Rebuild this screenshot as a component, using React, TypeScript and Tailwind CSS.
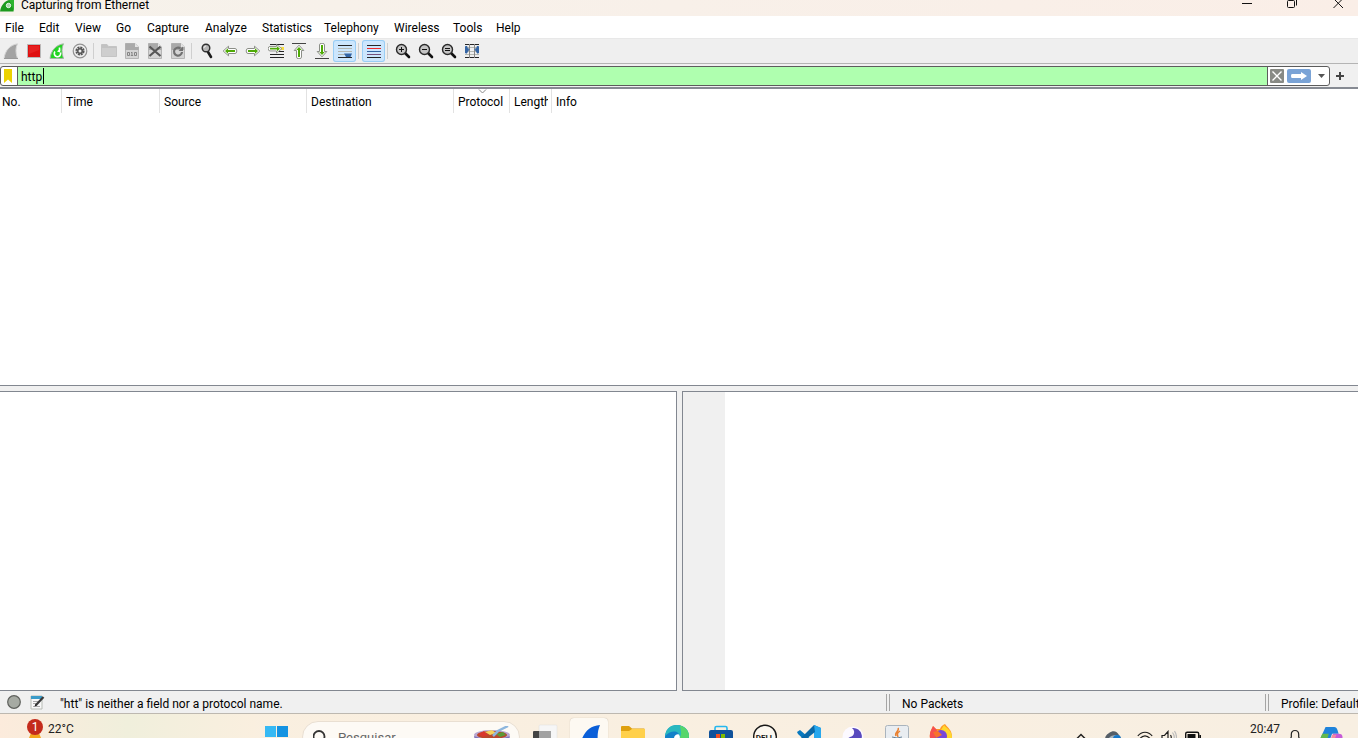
import React from 'react'

interface ToolItem {
  label: string
  icon: React.ReactNode
  active?: boolean
  disabled?: boolean
}

const menus = [
  { label: 'File', width: 'w-[34px]' },
  { label: 'Edit', width: 'w-9' },
  { label: 'View', width: 'w-[41px]' },
  { label: 'Go', width: 'w-[31px]' },
  { label: 'Capture', width: 'w-[58px]' },
  { label: 'Analyze', width: 'w-[57px]' },
  { label: 'Statistics', width: 'w-[62px]' },
  { label: 'Telephony', width: 'w-[70px]' },
  { label: 'Wireless', width: 'w-[59px]' },
  { label: 'Tools', width: 'w-[43px]' },
  { label: 'Help', width: 'w-10' }
]

const columns = [
  { label: 'No.', width: 'w-[62px]' },
  { label: 'Time', width: 'w-[98px]' },
  { label: 'Source', width: 'w-[147px]' },
  { label: 'Destination', width: 'w-[147px]' },
  { label: 'Protocol', width: 'w-14', sorted: true },
  { label: 'Length', width: 'w-[42px]' },
  { label: 'Info', width: '' }
]

function Icon({ children }: { children: React.ReactNode }) {
  return (
    <svg className="w-4 h-4 shrink-0" viewBox="0 0 16 16" fill="none" aria-hidden="true">
      {children}
    </svg>
  )
}

const arrowPath = 'M1.2 8 L6.5 3.2 V5.5 H13 Q14.8 5.5 14.8 8 Q14.8 10.5 13 10.5 H6.5 V12.8 Z'
const arrowCore = 'M3 8 L6 5.3 V7 H13 V9 H6 V10.7 Z'

function GreenArrow({ transform }: { transform?: string }) {
  return (
    <g transform={transform}>
      <path d={arrowPath} fill="#fff" stroke="#8b8e87" />
      <path d={arrowCore} fill="#4faa06" />
    </g>
  )
}

function Page({ children }: { children: React.ReactNode }) {
  return (
    <Icon>
      <path d="M1.5 .5H11L14.5 4V15.5H1.5Z" fill="#d4d4d4" stroke="#b5b5b5" />
      <path d="M1.5 .5H11V4H14.5V7H1.5Z" fill="#a9a9a9" />
      <path d="M11 .5V4H14.5Z" fill="#e4e4e4" />
      {children}
    </Icon>
  )
}

function Magnifier({ children }: { children?: React.ReactNode }) {
  return (
    <Icon>
      <path d="M10 10L14 14" stroke="#111" strokeWidth="2.6" strokeLinecap="round" />
      <circle cx="6.5" cy="6.5" r="5" fill="#c4c4c4" stroke="#2a2a2a" strokeWidth="1.4" />
      {children}
    </Icon>
  )
}

const toolGroups: ToolItem[][] = [
  [
    {
      label: 'Start capturing packets',
      disabled: true,
      icon: (
        <Icon>
          <path d="M1 15.5C2 8 6.5 2 14.5 .8C12.5 5 12.5 10 14.5 15.5Z" fill="#a3a3a3" stroke="#d6d6d6" />
          <path d="M1 15.5H15" stroke="#999" />
        </Icon>
      )
    },
    {
      label: 'Stop capturing packets',
      icon: (
        <Icon>
          <path d="M1.5 1.5H14.5V14.5H1.5Z" fill="#df1010" stroke="#b9b9b9" />
          <path d="M3 3H13V7L3 11Z" fill="#ef3030" opacity=".5" />
        </Icon>
      )
    },
    {
      label: 'Restart current capture',
      icon: (
        <Icon>
          <path d="M1 15.5C2 8 6.5 2 14.5 .8C12.5 5 12.5 10 14.5 15.5Z" fill="#22d422" stroke="#a5b5a5" />
          <path d="M10.5 4.5V8M6 8.5A3.2 3.2 0 1 0 11.5 9.5" stroke="#fff" strokeWidth="1.6" />
          <path d="M8 8.5L11.2 5.5V9.5Z" fill="#fff" />
        </Icon>
      )
    },
    {
      label: 'Capture options',
      icon: (
        <Icon>
          <circle cx="8" cy="8" r="6.8" fill="#eee" stroke="#929292" strokeWidth="1.2" />
          <circle cx="8" cy="8" r="3.6" stroke="#555" strokeWidth="2" strokeDasharray="2 .8" />
          <circle cx="8" cy="8" r="3" fill="#555" />
          <circle cx="8" cy="8" r="1.5" fill="#eee" />
        </Icon>
      )
    }
  ],
  [
    {
      label: 'Open',
      disabled: true,
      icon: (
        <Icon>
          <path d="M.5 1.5H6L7.5 3.5H15.5V13.5H.5Z" fill="#c2c2c2" stroke="#c4c4c4" />
          <path d="M1 5H15V13H1Z" fill="#cecece" />
        </Icon>
      )
    },
    {
      label: 'Save',
      disabled: true,
      icon: (
        <Page>
          <path
            d="M3.5 9.5H5.5V12.5H3.5ZM10.5 9.5H12.5V12.5H10.5ZM8 9V13M7 9.5H8M6.8 12.5H9.2"
            stroke="#858585"
          />
        </Page>
      )
    },
    {
      label: 'Close',
      icon: (
        <Page>
          <path d="M2.5 3.5L13.5 13M13.5 3.5L2.5 13" stroke="#565656" strokeWidth="2.2" />
        </Page>
      )
    },
    {
      label: 'Reload',
      icon: (
        <Page>
          <path d="M10.5 5.5A4 4 0 1 0 12 9" stroke="#707070" strokeWidth="2.2" />
          <path d="M8.5 8H13V3.5Z" fill="#707070" />
        </Page>
      )
    }
  ],
  [
    {
      label: 'Find a packet',
      icon: (
        <Icon>
          <path d="M9 9L12 14" stroke="#1b1b1b" strokeWidth="2.6" strokeLinecap="round" />
          <circle cx="7" cy="5" r="3.8" fill="#b5b5b5" stroke="#303030" strokeWidth="1.4" />
          <path d="M5 5A2 2 0 0 1 7 3" stroke="#eee" />
        </Icon>
      )
    },
    { label: 'Previous packet', icon: <Icon><GreenArrow /></Icon> },
    { label: 'Next packet', icon: <Icon><GreenArrow transform="rotate(180 8 8)" /></Icon> },
    {
      label: 'Go to packet',
      icon: (
        <Icon>
          <path d="M2 1.5H16M2 11.5H16M2 14.5H16" stroke="#252525" />
          <path d="M12 4H16V7H12Z" fill="#f6dd3e" />
          <path d="M11 8.5H16" stroke="#252525" />
          <GreenArrow transform="translate(15 -1.5) scale(-1 .9)" />
        </Icon>
      )
    },
    {
      label: 'First packet',
      icon: (
        <Icon>
          <path d="M1 .5H15" stroke="#444" />
          <GreenArrow transform="translate(0 1) rotate(90 8 8)" />
        </Icon>
      )
    },
    {
      label: 'Last packet',
      icon: (
        <Icon>
          <path d="M1 15.5H15" stroke="#444" />
          <GreenArrow transform="translate(0 -1) rotate(270 8 8)" />
        </Icon>
      )
    },
    {
      label: 'Auto scroll',
      active: true,
      icon: (
        <Icon>
          <path d="M1 2.5H15M1 14.5H15" stroke="#252525" />
          <path d="M1 5.5H15M1 8.5H15M1 11.5H8" stroke="#b3b6b0" />
          <path d="M7 10.5H15L13.5 14H9Z" fill="#3465a4" />
        </Icon>
      )
    }
  ],
  [
    {
      label: 'Colorize packets',
      active: true,
      icon: (
        <Icon>
          <path d="M1 2.5H15M1 14.5H15" stroke="#252525" />
          <path d="M1 5.5H15" stroke="#ef2929" />
          <path d="M1 8.5H15" stroke="#3465a4" />
          <path d="M1 11.5H15" stroke="#75507b" />
        </Icon>
      )
    }
  ],
  [
    { label: 'Zoom in', icon: <Magnifier><path d="M4 6.5H9M6.5 4V9" stroke="#111" /></Magnifier> },
    { label: 'Zoom out', icon: <Magnifier><path d="M4 6.5H9" stroke="#111" /></Magnifier> },
    { label: 'Normal size', icon: <Magnifier><path d="M4 5.5H9M4 7.5H9" stroke="#111" /></Magnifier> },
    {
      label: 'Resize columns',
      icon: (
        <Icon>
          <path d="M1 1.5H15M1 14.5H15" stroke="#252525" />
          <path d="M1 4.5H15M1 8.5H15M1 11.5H15" stroke="#b5b8b2" />
          <path d="M5.5 1V15M10.5 1V15" stroke="#888" />
          <path d="M1.5 3.5H3V4.5L5 6.5L3 9V10H1.5ZM14.5 3.5H13V4.5L11 6.5L13 9V10H14.5Z" fill="#3465a4" stroke="#3465a4" />
        </Icon>
      )
    }
  ]
]

function TitleBar() {
  return (
    <header className="h-4 shrink-0 flex items-start justify-between overflow-hidden bg-gradient-to-r from-[#f6f2eb] to-[#faeee7]">
      <div className="flex items-start">
        <svg className="w-[14px] h-3 mr-[7px]" viewBox="0 0 14 12" fill="none" aria-hidden="true">
          <path d="M0 11.5C1 5 5 1 9 0H13.5V11.5Z" fill="#1d9a1d" />
          <path d="M9 0C11.5 3 12 7 14 11.5V0Z" fill="#2fb52f" />
          <circle cx="8.5" cy="5.5" r="2.2" fill="#a9d9a9" stroke="#eaf7ea" />
        </svg>
        <h1 className="leading-[10px] whitespace-nowrap">Capturing from Ethernet</h1>
      </div>
      <div className="flex items-start gap-[6px]">
        <button className="w-10 h-3 flex justify-center" aria-label="Minimize">
          <svg className="w-3 h-3" viewBox="0 0 12 12" fill="none"><path d="M2 3.5H12" stroke="#111" /></svg>
        </button>
        <button className="w-10 h-3 flex justify-center" aria-label="Restore">
          <svg className="w-3 h-3" viewBox="0 0 12 12" fill="none" stroke="#111">
            <rect x="1.5" y=".5" width="7" height="7" rx="1" />
            <path d="M10.5 0V5.5" />
          </svg>
        </button>
        <button className="w-10 h-3 flex justify-center" aria-label="Close window">
          <svg className="w-3 h-3" viewBox="0 0 12 12" fill="none"><path d="M1.5 -1.5L11 8M11 -1.5L1.5 8" stroke="#111" /></svg>
        </button>
      </div>
    </header>
  )
}

function ToolBar() {
  return (
    <div role="toolbar" aria-label="Main toolbar" className="h-[26px] shrink-0 -ml-px flex items-center bg-[#efefef] border-y border-t-[#e8e8e8] border-b-[#b4b4b4]">
      {toolGroups.map((group, i) => (
        <React.Fragment key={i}>
          {i > 0 && (
            <div className="w-[6px] h-4 flex pl-0.5">
              <div className="w-px bg-[#cfcfcf]" />
            </div>
          )}
          {group.map((tool) => (
            <button
              key={tool.label}
              aria-label={tool.label}
              disabled={tool.disabled}
              className={
                tool.active
                  ? 'w-[23px] h-[22px] pl-1 flex items-center rounded-[3px] bg-[#cce6fd] shadow-[inset_0_0_0_1px_#99cdf5]'
                  : 'w-[23px] h-[22px] pl-1 flex items-center'
              }
            >
              {tool.icon}
            </button>
          ))}
        </React.Fragment>
      ))}
    </div>
  )
}

function FilterBar() {
  return (
    <div className="h-[25px] shrink-0 flex items-center bg-[#f0f0f0] border-b-2 border-[#868a92]">
      <div className="flex-1 h-5 flex items-center border border-[#5c5c5c] rounded-[3px] bg-white overflow-hidden">
        <button className="w-[17px] h-full flex items-center pl-[3px] border-r border-[#5c5c5c]" aria-label="Bookmark this filter">
          <svg className="w-2 h-[14px]" viewBox="0 0 8 14"><path d="M0 0H8V14L4 10.5L0 14Z" fill="#ecd200" /></svg>
        </button>
        <div className="relative flex-1 h-full">
          <input
            type="text"
            aria-label="Display filter"
            defaultValue="http"
            className="block w-full h-full pl-[3px] pt-0.5 bg-[#afffaf] outline-none"
          />
          <span className="absolute left-[25px] top-px w-px h-4 bg-black" />
        </div>
        <button className="h-full pl-0.5 flex items-center border-l border-[#5c5c5c]" aria-label="Clear filter">
          <svg className="w-[14px] h-[14px]" viewBox="0 0 14 14">
            <rect width="14" height="14" rx="1" fill="#888a85" />
            <path d="M2.5 2.5L11.5 11.5M11.5 2.5L2.5 11.5" stroke="#fff" strokeWidth="1.4" />
          </svg>
        </button>
        <button className="pl-[3px]" aria-label="Apply filter">
          <svg className="w-6 h-[14px]" viewBox="0 0 24 14">
            <rect width="24" height="14" rx="2" fill="#7aa3d6" />
            <path d="M5 5H14V3L20 7L14 11V9H5Q4 9 4 7Q4 5 5 5Z" fill="#fff" />
          </svg>
        </button>
        <button className="w-[18px] h-full flex items-center justify-end pr-1" aria-label="Filter history">
          <svg className="w-[7px] h-1" viewBox="0 0 7 4"><path d="M0 0H7L3.5 4Z" fill="#555" /></svg>
        </button>
      </div>
      <button className="w-7 h-full flex items-center pl-[6px]" aria-label="Add a filter button">
        <svg className="w-2 h-2" viewBox="0 0 8 8"><path d="M4 0V8M0 4H8" stroke="#444" strokeWidth="2" /></svg>
      </button>
    </div>
  )
}

function PacketList() {
  return (
    <div className="flex-[98] min-h-0 bg-white border-b border-[#828790]">
      <table className="w-full table-fixed border-separate border-spacing-0">
        <thead>
          <tr>
            {columns.map((col) => (
              <th
                key={col.label}
                scope="col"
                className={`${col.width} h-6 p-0 pl-1 first:pl-0.5 pr-[3px] text-left font-normal border-r border-[#e2e2e2] last:border-r-0`}
              >
                <div className="relative h-6 pt-1">
                  {col.sorted && (
                    <svg className="absolute left-5 top-0 w-[9px] h-[5px]" viewBox="0 0 9 5" fill="none">
                      <path d="M1 .5L4.5 4L8 .5" stroke="#888" />
                    </svg>
                  )}
                  <div className="overflow-hidden whitespace-nowrap leading-[18px]">{col.label}</div>
                </div>
              </th>
            ))}
          </tr>
        </thead>
        <tbody />
      </table>
    </div>
  )
}

function StatusDivider() {
  return <div className="w-1 h-[17px] shrink-0 border-x border-[#a5a5a5]" />
}

function StatusBar() {
  return (
    <footer className="h-[22px] shrink-0 flex items-center overflow-hidden bg-[#f0f0f0] whitespace-nowrap">
      <div className="flex-1 min-w-0 flex items-center pl-[7px]">
        <button aria-label="Expert information">
          <svg className="w-[14px] h-[14px]" viewBox="0 0 14 14">
            <circle cx="7" cy="7" r="6.3" fill="#a6aaa3" stroke="#5e605c" strokeWidth="1.2" />
          </svg>
        </button>
        <button className="ml-[9px]" aria-label="Capture file comment">
          <svg className="w-[15px] h-[15px]" viewBox="0 0 15 15" fill="none">
            <path d="M1 1H12V14H1Z" fill="#f8f8f8" stroke="#b8bcb5" />
            <path d="M1 1H12V4H1Z" fill="#3a9bc9" />
            <path d="M3 6.5H8M3 8.5H7M3 11.5H10" stroke="#aaa" />
            <path d="M6 10L13.5 2" stroke="#3a3a3a" strokeWidth="2.2" />
            <path d="M4.5 11.5L5.5 8.8L7.2 10.5Z" fill="#222" />
          </svg>
        </button>
        <span className="ml-[15px] pt-1">"htt" is neither a field nor a protocol name.</span>
      </div>
      <StatusDivider />
      <div className="w-[375px] pl-3 pt-1">No Packets</div>
      <StatusDivider />
      <div className="w-[89px] pl-3 pt-1">Profile: Default</div>
    </footer>
  )
}

const apps = [
  {
    label: 'Task view',
    icon: (
      <>
        <rect x="6" y="0" width="18" height="18" rx="1" fill="#f6f6f6" stroke="#ddd" strokeWidth=".5" />
        <rect x="0" y="6" width="18" height="18" rx="1" fill="#444" />
        <rect x="6" y="6" width="12" height="12" fill="#a2a2a2" />
      </>
    )
  },
  {
    label: 'Wireshark',
    active: true,
    icon: <path d="M2 24C5 9 11 1 23 0C20 7 20 14 22 24Z" fill="#0b5fd8" />
  },
  {
    label: 'File Explorer',
    icon: (
      <>
        <path d="M0 2Q0 1 1 1H8L11 3.5H23Q24 3.5 24 5V22H0Z" fill="#dfa00e" />
        <path d="M0 6H8L11 4H24V22H0Z" fill="#ffd04a" />
      </>
    )
  },
  {
    label: 'Edge',
    icon: (
      <>
        <circle cx="12" cy="12" r="12" fill="#1381c9" />
        <path d="M0 11C1 3 6 0 12 0C19 0 24 5 24 11C24 16 15 17 14 13C16 7 8 3 0 11Z" fill="#29b8bf" />
        <path d="M15 .5C21 2 24 7 24 11C24 16 15 17 14 13C18 10 15 3 15 .5Z" fill="#56d66b" />
        <path d="M9 13A4 4 0 0 1 14 9.5Q16 13 13.5 14Z" fill="#fff" />
      </>
    )
  },
  {
    label: 'Microsoft Store',
    icon: (
      <>
        <path d="M6 6V3Q6 1.5 7.5 1.5H16.5Q18 1.5 18 3V6" fill="none" stroke="#25b7ef" strokeWidth="1.6" />
        <rect x="0" y="5" width="24" height="19" rx="2" fill="#10529b" />
        <path d="M7 9H11V13H7Z" fill="#f25022" />
        <path d="M12 9H16V13H12Z" fill="#7fba00" />
        <path d="M7 14H11V18H7Z" fill="#00a4ef" />
        <path d="M12 14H16V18H12Z" fill="#ffb900" />
      </>
    )
  },
  {
    label: 'Dell',
    icon: (
      <>
        <circle cx="12" cy="11.5" r="11.3" fill="#fbf7ef" stroke="#171717" strokeWidth="1.4" />
        <text x="12" y="15" textAnchor="middle" fontSize="8" fontWeight="700" fill="#171717">DELL</text>
      </>
    )
  },
  {
    label: 'Visual Studio Code',
    icon: (
      <>
        <path d="M17 0L24 3V21L17 24L1 9L0 7L3 5L17 17Z" fill="#0879bf" />
        <path d="M17 0L24 3V21L17 24Z" fill="#28a8ee" />
        <path d="M17 0L18 7L3 19L0 17Z" fill="#0a69a8" />
      </>
    )
  },
  {
    label: 'Insomnia',
    icon: (
      <>
        <circle cx="12" cy="12" r="10.5" fill="#fcf9ff" />
        <path d="M11 3A8.5 8.5 0 1 1 4 13A5 5 0 0 0 9 12A5 5 0 0 0 11 3Z" fill="#5849be" />
      </>
    )
  },
  {
    label: 'Java',
    icon: (
      <>
        <rect x=".5" y=".5" width="23" height="23" rx="2" fill="#e9edf1" stroke="#aab4bd" />
        <path d="M13 3C15 6 9 7 11 11M15 6C12 8 12 9 13 12" fill="none" stroke="#e98131" strokeWidth="1.5" />
        <path d="M7 12Q12 14 17 12" fill="none" stroke="#66829b" />
      </>
    )
  },
  {
    label: 'Firefox',
    icon: (
      <>
        <path d="M1 13C0 7 3 4 4 1L7 4L11 4C12 1 14 0 16 -1C19 3 23 5 23 12C23 19 18 23 12 23C6 23 2 19 1 13Z" fill="#ff9825" />
        <path d="M15 0C18 4 23 5 23 13L19 17L12 5Z" fill="#ffd72e" />
        <path d="M1 13C0 7 3 4 4 1L8 5L5 18Z" fill="#f54f50" />
        <circle cx="12" cy="11" r="6" fill="#7748d8" />
        <path d="M4 7L9 6L13 10L7 13Z" fill="#f8722b" />
      </>
    )
  }
]

function TaskBar() {
  return (
    <nav
      aria-label="Taskbar"
      className="h-[25px] shrink-0 flex items-start overflow-hidden border-t border-[#bdb8b0] bg-gradient-to-r from-[#faefdf] to-[#f8efe2]"
    >
      <div className="w-[255px] h-full shrink-0 bg-gradient-to-r from-[#fcebdc] via-[#f0efdc] to-[#faefdf]">
        <button className="flex items-start pl-[27px] pt-1 gap-[5px]">
          <svg className="w-4 h-5" viewBox="0 0 16 20" aria-hidden="true">
            <path d="M4 15H12L14 20H2Z" fill="#f4a71f" />
            <circle cx="8" cy="9" r="8" fill="#c42b1c" />
            <text x="8" y="13" textAnchor="middle" fontSize="12" fill="#fff">1</text>
          </svg>
          <span className="pt-0.5 leading-[18px] text-[#222]">22°C</span>
        </button>
      </div>

      <button className="w-11 pl-[10px] pt-3" aria-label="Start">
        <svg className="w-[23px] h-[23px]" viewBox="0 0 23 23">
          <path d="M0 0H11V11H0Z" fill="#36b9f4" />
          <path d="M12 0H23V11H12Z" fill="#1593e2" />
          <path d="M0 12H11V23H0ZM12 12H23V23H12Z" fill="#0f7fd6" />
        </svg>
      </button>

      <label className="w-[218px] h-8 mt-[7px] mx-[3px] pl-[10px] pr-[9px] shrink-0 flex items-start rounded-full border border-[#e9dfd2] bg-[#fdfaf5]">
        <svg className="w-4 h-4 mt-2" viewBox="0 0 16 16" fill="none" stroke="#333" strokeWidth="1.8">
          <circle cx="6" cy="6.5" r="5.5" />
          <path d="M10 11L14 15" />
        </svg>
        <input
          type="search"
          aria-label="Pesquisar"
          placeholder="Pesquisar"
          className="flex-1 min-w-0 h-[30px] ml-[9px] text-[13px] bg-transparent outline-none placeholder:text-[#666]"
        />
        <svg className="w-9 h-6 mt-1 shrink-0" viewBox="0 0 36 24" aria-hidden="true">
          <ellipse cx="18" cy="9" rx="18" ry="5" fill="#b9a7d0" />
          <ellipse cx="18" cy="9" rx="15" ry="4" fill="#b8482b" />
          <path d="M4 8L10 5L14 9L9 11Z" fill="#d9372c" />
          <path d="M11 6L18 4L22 7L16 9Z" fill="#f5d35c" />
          <path d="M22 8L29 6L32 9L26 11Z" fill="#5b9a35" />
          <path d="M0 10Q18 17 36 10Q34 23 18 23Q2 23 0 10Z" fill="#8273b6" />
          <path d="M19 10L24 5L34 0" fill="none" stroke="#8db6dd" strokeWidth="2.5" />
        </svg>
      </label>

      {apps.map((app) => (
        <button key={app.label} aria-label={app.label} className="w-11 h-12 shrink-0 flex justify-center pt-1">
          <span
            className={
              app.active
                ? 'w-[38px] h-10 flex justify-center pt-[7px] rounded-[4px] bg-[#fdf9f2] shadow-[0_0_1px_#b8aa98]'
                : 'w-[38px] h-10 flex justify-center pt-[7px]'
            }
          >
            <svg className="w-6 h-6 overflow-visible" viewBox="0 0 24 24">{app.icon}</svg>
          </span>
        </button>
      ))}

      <div className="ml-auto mr-[15px] shrink-0 flex items-start">
        <button className="pt-[19px] mr-[19px]" aria-label="Show hidden icons">
          <svg className="w-[10px] h-[6px]" viewBox="0 0 10 6" fill="none"><path d="M1 5.5L5 1.5L9 5.5" stroke="#222" strokeWidth="1.5" /></svg>
        </button>
        <button className="pt-[17px] mr-4" aria-label="OneDrive">
          <svg className="w-4 h-3" viewBox="0 0 16 12">
            <path d="M0 9C0 4 3 3 4 2C8 -1 12 0 14 4C17 7 16 11 14 11H3Q0 11 0 9Z" fill="#555e67" />
            <path d="M3 9C5 4 9 4 13 4L15 9Z" fill="#a9b4bd" />
            <circle cx="12" cy="8" r="4" fill="#1778c9" />
          </svg>
        </button>
        <button className="pt-4 mr-2 flex items-start" aria-label="Network, volume and battery">
          <svg className="w-4 h-4" viewBox="0 0 16 16" fill="none" stroke="#1d1d1d" strokeWidth="1.2">
            <path d="M.8 6C4.8 1 11.2 1 15.2 6M3 8.5C6 5 10 5 13 8.5M5.5 11C7 9 9 9 10.5 11" />
          </svg>
          <svg className="w-4 h-4 ml-2" viewBox="0 0 16 16" fill="none" stroke="#1d1d1d" strokeWidth="1.2">
            <path d="M1 5.5H3.5L7 1.5V13L3.5 9.5H1Z" />
            <path d="M9.5 5Q11 7 9.5 10" />
            <path d="M11.5 2.5Q15 7 11.5 12M13.5 1Q17.5 7 13.5 14" stroke="#bbb" />
          </svg>
          <svg className="w-4 h-4 ml-2" viewBox="0 0 16 16" fill="none">
            <rect x=".7" y="2.2" width="13" height="9" rx="1.5" stroke="#111" strokeWidth="1.4" />
            <path d="M2.5 4H10.5V10H2.5Z" fill="#111" />
            <path d="M15.2 5V9" stroke="#111" strokeWidth="1.6" />
          </svg>
        </button>
        <button className="w-[31px] ml-10 mt-[6px] text-[#222] text-right leading-[18px]">20:47</button>
        <button className="pt-[15px] ml-[9px] mr-[18px]" aria-label="Notifications">
          <svg className="w-3 h-4" viewBox="0 0 12 16" fill="none" stroke="#222" strokeWidth="1.2">
            <path d="M1 11L2.3 8V5.5Q2.3 1.5 6 1.5Q9.7 1.5 9.7 5.5V8L11 11Z" />
          </svg>
        </button>
        <button className="pt-3" aria-label="Copilot">
          <svg className="w-6 h-6" viewBox="0 0 22 22">
            <path d="M6 1H14Q16 1 17 4L18 7H12L8 18H3Q-1 18 1 12Z" fill="#1f83db" />
            <path d="M3 7H9L6 18H3Q-1 18 1 12Z" fill="#63b84d" />
            <path d="M13 7H18Q23 7 21 13L19 19Q18 21 15 21H9Z" fill="#c65bd7" />
            <path d="M12 8H16L13 15H10Z" fill="#f18ba0" />
          </svg>
        </button>
      </div>
    </nav>
  )
}

export default function App() {
  return (
    <div className="h-screen flex flex-col overflow-hidden bg-[#f0f0f0] font-[Roboto,'Open_Sans',sans-serif] text-[12px] text-black cursor-default">
      <TitleBar />
      <div role="menubar" className="h-[22px] shrink-0 flex items-center pl-[5px] pt-0.5 bg-white">
        {menus.map((menu) => (
          <button key={menu.label} role="menuitem" className={`${menu.width} text-left whitespace-nowrap leading-5`}>
            {menu.label}
          </button>
        ))}
      </div>
      <ToolBar />
      <FilterBar />
      <main className="flex-1 min-h-0 flex flex-col gap-[5px]">
        <PacketList />
        <div className="flex-[99] min-h-0 flex gap-[5px]">
          <section aria-label="Packet details" className="flex-1 bg-white border border-l-0 border-[#828790]" />
          <section aria-label="Packet bytes" className="flex-1 flex bg-white border border-r-0 border-[#828790]">
            <div className="w-[42px] bg-[#f0f0f0]" />
          </section>
        </div>
      </main>
      <StatusBar />
      <TaskBar />
    </div>
  )
}
